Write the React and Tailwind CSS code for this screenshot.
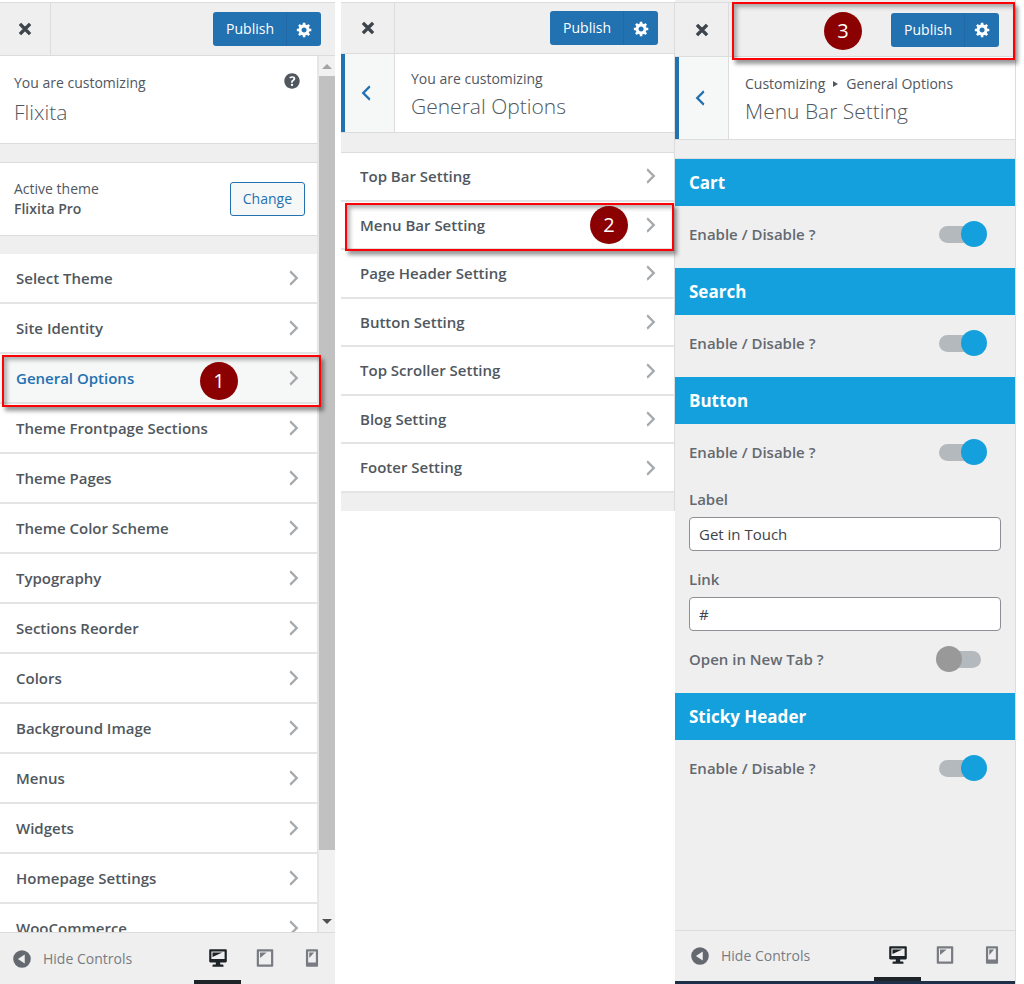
import React, { useState } from "react";
import clsx from "clsx";

const ICONS = {
  close: "M14.95 6.46L11.41 10l3.54 3.54-1.41 1.41L10 11.42l-3.53 3.53-1.42-1.42L8.58 10 5.05 6.47l1.42-1.42L10 8.58l3.54-3.53z",
  right: "M6 15l5-5-5-5 1-2 7 7-7 7z",
  left: "M14 5l-5 5 5 5-1 2-7-7 7-7z",
  gear: "M18 12h-2.18c-.17.7-.44 1.35-.81 1.93l1.54 1.54-2.1 2.1-1.54-1.54c-.58.36-1.23.63-1.91.79V19H8v-2.18c-.68-.16-1.33-.43-1.91-.79l-1.54 1.54-2.12-2.12 1.54-1.54c-.36-.58-.63-1.23-.79-1.91H1V9.03h2.17c.16-.7.44-1.35.8-1.94L2.43 5.55l2.1-2.1 1.54 1.54c.58-.37 1.24-.64 1.93-.81V2h3v2.18c.68.16 1.33.43 1.91.79l1.54-1.54 2.12 2.12-1.54 1.54c.36.59.64 1.24.8 1.94H18V12zm-8.5 1.5c1.66 0 3-1.34 3-3s-1.34-3-3-3-3 1.34-3 3 1.34 3 3 3z",
  help: "M17 10c0-3.87-3.14-7-7-7-3.87 0-7 3.13-7 7s3.13 7 7 7c3.86 0 7-3.13 7-7zm-6.3 1.48H9.14v-.43c0-.38.08-.7.24-.98s.46-.57.88-.89c.41-.29.68-.53.81-.71.14-.18.2-.39.2-.62 0-.25-.09-.44-.28-.58-.19-.13-.45-.19-.79-.19-.58 0-1.25.19-2 .57l-.64-1.28c.87-.49 1.8-.74 2.77-.74.81 0 1.45.2 1.92.58.48.39.71.91.71 1.55 0 .43-.09.8-.29 1.11-.19.32-.57.67-1.11 1.06-.38.28-.61.49-.71.63-.1.15-.15.34-.15.57v.35zm-1.47 2.74c-.18-.17-.27-.42-.27-.73 0-.33.08-.58.26-.75s.43-.25.77-.25c.32 0 .57.09.75.26s.27.42.27.74c0 .3-.09.55-.27.72-.18.18-.43.27-.75.27-.33 0-.58-.09-.76-.26z",
  collapse: "M10 2a8 8 0 1 0 0 16 8 8 0 0 0 0-16zM12.5 5.8v8.4L6.3 10z",
  desktop: "M3 2h14c.55 0 1 .45 1 1v10c0 .55-.45 1-1 1h-5v2h2c.55 0 1 .45 1 1v1H5v-1c0-.55.45-1 1-1h2v-2H3c-.55 0-1-.45-1-1V3c0-.55.45-1 1-1zm13 9V4H4v7h12zM5 5h9L5 9V5z",
  tablet: "M3.5 2h13c.55 0 1 .45 1 1v14c0 .55-.45 1-1 1h-13c-.55 0-1-.45-1-1V3c0-.55.45-1 1-1zm12 14V4h-11v12h11zM5.5 5h6l-6 5V5z",
  phone: "M5.5 2h9c.55 0 1 .45 1 1v14c0 .55-.45 1-1 1h-9c-.55 0-1-.45-1-1V3c0-.55.45-1 1-1zm8 12V4h-7v10h7zM7.5 5h4.500l-4.500 5V5z",
};

const themeSections = [
  "Select Theme",
  "Site Identity",
  "General Options",
  "Theme Frontpage Sections",
  "Theme Pages",
  "Theme Color Scheme",
  "Typography",
  "Sections Reorder",
  "Colors",
  "Background Image",
  "Menus",
  "Widgets",
  "Homepage Settings",
  "WooCommerce",
];

const generalSections = [
  "Top Bar Setting",
  "Menu Bar Setting",
  "Page Header Setting",
  "Button Setting",
  "Top Scroller Setting",
  "Blog Setting",
  "Footer Setting",
];

function Icon({ name, className }) {
  return (
    <svg viewBox="0 0 20 20" fill="currentColor" fillRule="evenodd" aria-hidden="true" className={clsx("shrink-0", className)}>
      <path d={ICONS[name]} />
    </svg>
  );
}

// Red outline and numbered marker, laid over the element they point at
function Highlight({ className }) {
  return <div className={clsx("pointer-events-none absolute z-10 border-2 border-[#fb0207] shadow-[3px_4px_4px_rgba(0,0,0,0.4),inset_3px_3px_4px_rgba(0,0,0,0.3)]", className)} />;
}

function Step({ number, className }) {
  return (
    <span className={clsx("absolute z-20 flex size-[38px] items-center justify-center rounded-full bg-[#8b0000] text-xl text-white", className)}>
      {number}
    </span>
  );
}

function TopBar({ className, children }) {
  return (
    <header className={clsx("relative flex shrink-0 items-stretch justify-between border-y border-[#dcdcde] bg-[#efefef]", className)}>
      <button type="button" aria-label="Close" className="flex w-[51px] items-center justify-center border-r border-[#dcdcde] text-[#3c434a] in-data-nested:w-[54px]">
        <Icon name="close" className="size-[22px] stroke-current stroke-1" />
      </button>
      <div className="flex items-center pr-[14px] in-data-nested:pr-4">
        <button type="button" className="h-[34px] rounded-l-[3px] bg-[#2271b1] pr-3 pl-[13px] text-sm text-white">
          Publish
        </button>
        <button type="button" aria-label="Publish Settings" className="flex h-[34px] w-[35px] items-center justify-center rounded-r-[3px] border-l border-[#2069a6] bg-[#2271b1] text-white">
          <Icon name="gear" className="size-[17px]" />
        </button>
      </div>
      {children}
    </header>
  );
}

function NestedTitle({ trail, title, className }) {
  return (
    <div className={clsx("flex shrink-0 border-b border-[#dcdcde] bg-white", className)}>
      <button type="button" aria-label="Back" className="flex w-[54px] items-center justify-center border-r border-l-4 border-r-[#dcdcde] border-l-[#2271b1] bg-[#f6f7f7] pr-2 text-[#2271b1]">
        <Icon name="left" className="size-[22px]" />
      </button>
      <div className="flex flex-col justify-center pt-[2px] pl-4 text-[#50575e]">
        <span className="flex items-center gap-2 text-sm leading-6">{trail}</span>
        <h2 className="text-[21px] leading-[30px] font-light">{title}</h2>
      </div>
    </div>
  );
}

function SectionRow({ label, active, className, children }) {
  return (
    <li className={clsx("relative border-b-2 border-[#e4e4e6]", active ? "bg-[#f6f7f7]" : "bg-white", className)}>
      <button type="button" className={clsx("flex size-full items-center justify-between pr-3 pl-4 text-left text-[15px] font-semibold in-data-nested:pl-[19px]", active ? "text-[#2271b1]" : "text-[#50575e]")}>
        {label}
        <Icon name="right" className="size-[22px] text-[#a7aaad]" />
      </button>
      {children}
    </li>
  );
}

function DeviceFooter({ className }) {
  const [device, setDevice] = useState("desktop");
  return (
    <footer className={clsx("flex shrink-0 items-stretch justify-between border-t border-[#dcdcde] bg-[#efefef]", className)}>
      <button type="button" className="flex items-center gap-[10px] text-sm text-[#787c82]">
        <Icon name="collapse" className="size-[22px] text-[#646970]" />
        Hide Controls
      </button>
      <div className="flex">
        {["desktop", "tablet", "phone"].map((name) => (
          <button
            key={name}
            type="button"
            aria-label={name}
            onClick={() => setDevice(name)}
            className={clsx("flex w-[47px] items-center justify-center border-b-4 pt-[2px]", device === name ? "border-[#1d2327] text-[#1d2327]" : "border-transparent text-[#787c82]")}
          >
            <Icon name={name} className="size-[22px]" />
          </button>
        ))}
      </div>
    </footer>
  );
}

function ToggleRow({ label, id, checked = false }) {
  return (
    <div className="flex items-center justify-between">
      <label htmlFor={id} className="text-[15px] leading-6 font-semibold text-[#646970]">{label}</label>
      <input
        id={id}
        type="checkbox"
        defaultChecked={checked}
        className="relative mr-5 h-[17px] w-[42px] appearance-none rounded-full bg-[#b4b9be] before:absolute before:-top-[5px] before:-left-[3px] before:size-[26px] before:rounded-full before:bg-[#999] checked:mr-4 checked:w-[46px] checked:before:left-[22px] checked:before:bg-[#14a0dc]"
      />
    </div>
  );
}

function TextField({ label, id, value }) {
  return (
    <div className="flex flex-col gap-[6px]">
      <label htmlFor={id} className="text-[15px] leading-6 font-semibold text-[#646970]">{label}</label>
      <input id={id} type="text" defaultValue={value} className="h-[34px] w-full rounded-sm border border-[#8c8f94] bg-white px-[9px] text-[15px] text-[#3c434a]" />
    </div>
  );
}

function SettingGroup({ title, className, children }) {
  return (
    <section>
      <h3 className="flex h-[47px] items-center bg-[#14a0dc] px-[14px] text-[17px] font-bold text-white">{title}</h3>
      <div className={clsx("px-[14px] pt-4", className)}>{children}</div>
    </section>
  );
}

function ThemePanel() {
  return (
    <div className="mr-[6px] flex min-h-0 flex-col pt-[2px]">
      <TopBar className="h-[54px]" />
      <div className="flex min-h-0 flex-1 overflow-hidden">
        <div className="min-w-0 flex-1 bg-[#efefef]">
          <div className="flex h-[88px] items-start justify-between border-b border-[#dcdcde] bg-white px-[14px] pt-[14px] text-[#50575e]">
            <div className="pt-[1px]">
              <p className="text-sm leading-6">You are customizing</p>
              <h1 className="text-[21px] leading-[34px] font-light">Flixita</h1>
            </div>
            <button type="button" aria-label="Help">
              <Icon name="help" className="size-[22px]" />
            </button>
          </div>
          <div className="mt-[18px] flex h-[74px] items-center justify-between border-y border-[#dcdcde] bg-white pr-3 pl-[14px] text-sm leading-5 text-[#50575e]">
            <p>
              Active theme
              <strong className="block font-semibold">Flixita Pro</strong>
            </p>
            <button type="button" className="h-[34px] rounded-[3px] border border-[#2271b1] bg-[#f6f7f7] px-3 text-[#2271b1]">
              Change
            </button>
          </div>
          <ul className="mt-[18px]">
            {themeSections.map((label) => (
              <SectionRow key={label} label={label} active={label === "General Options"} className="h-[50px]">
                {label === "General Options" && (
                  <>
                    <Highlight className="top-[1px] -right-1 left-[2px] h-[52px]" />
                    <Step number={1} className="top-2 left-[200px]" />
                  </>
                )}
              </SectionRow>
            ))}
          </ul>
        </div>
        {/* Scrollbar */}
        <div className="flex w-[18px] flex-col items-center border-l-2 border-[#e6e6e6] bg-[#f1f1f1]">
          <span className="flex h-5 items-center">
            <span className="border-x-[5px] border-b-[5px] border-x-transparent border-b-[#a3a3a3]" />
          </span>
          <span className="w-full flex-1 bg-[#c1c1c1]" />
          <span className="flex h-[82px] items-end pb-2">
            <span className="border-x-[5px] border-t-[5px] border-x-transparent border-t-[#505050]" />
          </span>
        </div>
      </div>
      <DeviceFooter className="h-[52px] pl-[11px]" />
    </div>
  );
}

function GeneralPanel() {
  return (
    <div data-nested className="pt-[2px]">
      <div className="border-r border-[#dcdcde] bg-[#efefef] pb-[18px]">
        <TopBar className="h-[52px]" />
        <NestedTitle trail="You are customizing" title="General Options" className="h-[79px]" />
        <ul className="mt-[19px] grid h-[341px] auto-rows-fr border-t border-[#dcdcde]">
          {generalSections.map((label) => (
            <SectionRow key={label} label={label}>
              {label === "Menu Bar Setting" && (
                <>
                  <Highlight className="top-[1px] right-0 left-1 h-[48px]" />
                  <Step number={2} className="top-1 right-[46px]" />
                </>
              )}
            </SectionRow>
          ))}
        </ul>
      </div>
    </div>
  );
}

function MenuBarPanel() {
  return (
    <div data-nested className="flex min-h-0 flex-col border-r border-[#dcdcde] bg-[#efefef]">
      <TopBar className="mt-[2px] h-[55px]">
        <Highlight className="-top-[1px] right-0 left-[57px] h-[58px]" />
        <Step number={3} className="top-[9px] right-[153px]" />
      </TopBar>
      <NestedTitle
        trail={
          <>
            Customizing
            <span className="border-y-[3px] border-l-[5px] border-y-transparent border-l-[#50575e]" />
            General Options
          </>
        }
        title="Menu Bar Setting"
        className="h-[83px]"
      />
      <div className="mt-[18px] min-h-0 flex-1 border-t border-[#dcdcde]">
        <SettingGroup title="Cart" className="pb-[22px]">
          <ToggleRow id="cart-enable" label="Enable / Disable ?" checked />
        </SettingGroup>
        <SettingGroup title="Search" className="pb-[22px]">
          <ToggleRow id="search-enable" label="Enable / Disable ?" checked />
        </SettingGroup>
        <SettingGroup title="Button" className="pb-[22px]">
          <ToggleRow id="button-enable" label="Enable / Disable ?" checked />
          <div className="mt-[23px] flex flex-col gap-4">
            <TextField id="button-label" label="Label" value="Get in Touch" />
            <TextField id="button-link" label="Link" value="#" />
            <ToggleRow id="button-new-tab" label="Open in New Tab ?" />
          </div>
        </SettingGroup>
        <SettingGroup title="Sticky Header">
          <ToggleRow id="sticky-enable" label="Enable / Disable ?" checked />
        </SettingGroup>
      </div>
      <DeviceFooter className="h-[51px] pl-[14px]" />
      <div className="h-[3px] shrink-0 bg-[#1d2f49]" />
    </div>
  );
}

export default function App() {
  return (
    <main className="grid h-screen grid-cols-[341fr_334fr_341fr] grid-rows-1 overflow-hidden bg-white pr-2 font-['Open_Sans','Noto_Sans',sans-serif]">
      <ThemePanel />
      <GeneralPanel />
      <MenuBarPanel />
    </main>
  );
}
